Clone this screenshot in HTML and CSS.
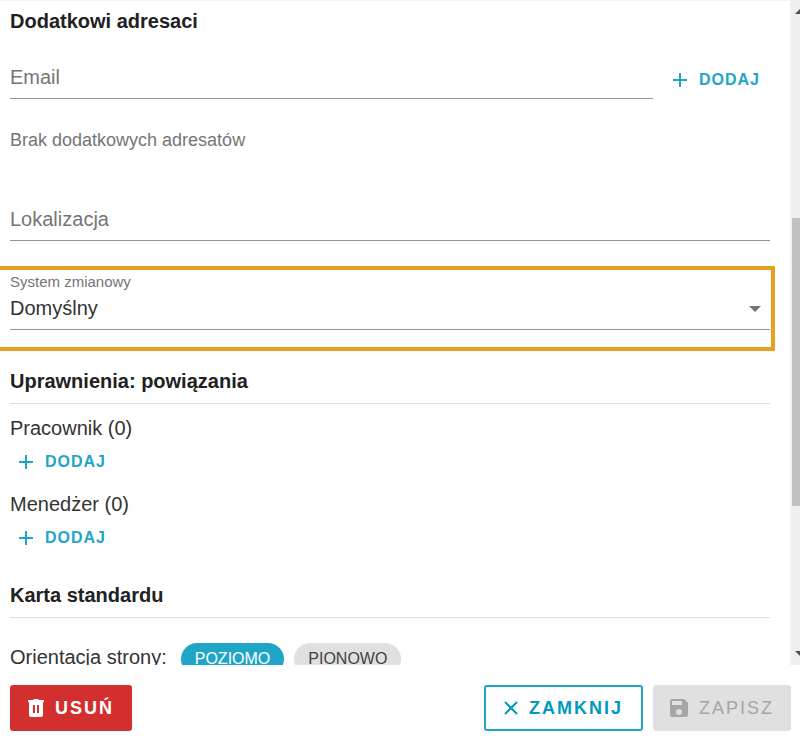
FILE: index.html
```html
<!DOCTYPE html>
<html lang="pl">
<head>
  <meta charset="UTF-8">
  <meta name="viewport" content="width=device-width, initial-scale=1">
  <title>Karta standardu</title>
  <link rel="stylesheet" href="styles.css">
</head>
<body>

<form class="dialog">
  <div class="dialog-body">
    <div class="content">
      <h2>Dodatkowi adresaci</h2>
      <div class="email-row">
        <input class="field" type="email" placeholder="Email" aria-label="Email">
        <button type="button" class="btn-text">
          <svg class="icon-plus" viewBox="0 0 14 14"><path d="M7 0v14M0 7h14"/></svg>
          Dodaj
        </button>
      </div>
      <p class="hint">Brak dodatkowych adresatów</p>
      <input class="field" type="text" placeholder="Lokalizacja" aria-label="Lokalizacja">

      <div class="highlight">
        <label for="shiftSystem">System zmianowy</label>
        <div class="select-wrap">
          <select id="shiftSystem" class="field">
            <option>Domyślny</option>
          </select>
          <svg class="icon-caret" viewBox="0 0 12 6"><path d="M0 0h12L6 6z"/></svg>
        </div>
      </div>

      <h2 class="section-title">Uprawnienia: powiązania</h2>
      <div class="group">
        <p>Pracownik (0)</p>
        <button type="button" class="btn-text">
          <svg class="icon-plus" viewBox="0 0 14 14"><path d="M7 0v14M0 7h14"/></svg>
          Dodaj
        </button>
      </div>
      <div class="group">
        <p>Menedżer (0)</p>
        <button type="button" class="btn-text">
          <svg class="icon-plus" viewBox="0 0 14 14"><path d="M7 0v14M0 7h14"/></svg>
          Dodaj
        </button>
      </div>

      <h2 class="section-title card-title">Karta standardu</h2>
      <div class="orientation">
        <span>Orientacja strony:</span>
        <div class="chips">
          <button type="button" class="chip active">Poziomo</button>
          <button type="button" class="chip">Pionowo</button>
        </div>
      </div>
    </div>

    <div class="scrollbar">
      <svg viewBox="0 0 10 16"><path d="M5 13l6-6 6 6z"/></svg>
      <div class="track">
        <div class="thumb"></div>
      </div>
      <svg viewBox="0 0 10 16"><path d="M5 2l6 6 6-6z"/></svg>
    </div>
  </div>

  <div class="footer">
    <button type="button" class="btn btn-delete">
      <svg class="icon-trash" viewBox="0 0 16 18"><path fill-rule="evenodd" d="M0 1h5l1-1h4l1 1h5v2H0zM1 3h14v13q0 2-2 2H3q-2 0-2-2zM5 6v8h2V6zM9 6v8h2V6z"/></svg>
      Usuń
    </button>
    <button type="button" class="btn btn-close">
      <svg class="icon-close" viewBox="0 0 14 14"><path d="M1 1l12 12M13 1L1 13"/></svg>
      Zamknij
    </button>
    <button type="submit" class="btn btn-save" disabled>
      <svg class="icon-save" viewBox="0 0 18 18"><path fill-rule="evenodd" d="M2 0h12l4 4v12q0 2-2 2H2q-2 0-2-2V2q0-2 2-2zM2 2v4h10V2zM9 10a3 3 0 1 0 0 6 3 3 0 0 0 0-6z"/></svg>
      Zapisz
    </button>
  </div>
</form>

</body>
</html>
```

FILE: styles.css
```css
* {
  box-sizing: border-box;
}

body {
  margin: 0;
  font-family: "Liberation Sans", Arial, sans-serif;
  font-size: 20px;
  line-height: 24px;
  color: #333;
  background: #fff;
}

h2,
p {
  margin: 0;
}

h2 {
  font-size: 20px;
  color: #212121;
}

button {
  font-family: inherit;
  text-transform: uppercase;
  cursor: pointer;
}

.dialog {
  display: flex;
  flex-direction: column;
  height: 100vh;
  border-top: 1px solid #f2f2f2;
}

.dialog-body {
  flex: 1;
  min-height: 0;
  display: flex;
  overflow: hidden;
}

.content {
  flex: 1;
  min-width: 0;
  padding: 8px 20px 0 10px;
  overflow: hidden;
}

/* Fields */
.field {
  display: block;
  width: 100%;
  height: 34px;
  padding: 0 0 9px;
  border: none;
  border-bottom: 1px solid #949494;
  border-radius: 0;
  outline: none;
  background: none;
  font-family: inherit;
  font-size: 20px;
  line-height: 24px;
  color: #333;
}

.field::placeholder {
  color: #757575;
  opacity: 1;
}

.email-row {
  display: flex;
  align-items: flex-end;
  gap: 11px;
  margin-top: 24px;
}

.email-row .field {
  flex: 1;
  min-width: 0;
  margin-top: 8px;
}

.email-row .btn-text {
  height: 38px;
}

.hint {
  margin: 29px 0 55px;
  font-size: 18px;
  color: #757575;
}

.highlight {
  margin: 25px -5px 0 -10px;
  padding: 3px 1px 17px 10px;
  border: 4px solid #e8a020;
  border-left: none;
}

.highlight label {
  display: block;
  font-size: 15px;
  line-height: 18px;
  color: #757575;
}

.select-wrap {
  position: relative;
  margin-top: 5px;
}

.select-wrap select {
  appearance: none;
}

.icon-caret {
  position: absolute;
  right: 9px;
  top: 10px;
  width: 12px;
  height: 6px;
  fill: #757575;
  pointer-events: none;
}

/* Sections */
.section-title {
  margin: 18px 0 12px;
  padding-bottom: 10px;
  border-bottom: 1px solid #e0e0e0;
}

.card-title {
  margin: 23px 0 25px;
}

.group {
  margin-bottom: 8px;
}

.btn-text {
  display: flex;
  align-items: center;
  gap: 12px;
  height: 44px;
  padding: 0 10px 0 9px;
  border: none;
  background: none;
  font-size: 16px;
  font-weight: bold;
  letter-spacing: 1px;
  color: #1fa5c8;
}

.icon-plus {
  width: 14px;
  height: 14px;
  fill: none;
  stroke: currentColor;
  stroke-width: 2;
}

.orientation {
  display: flex;
  gap: 14px;
  line-height: 28px;
}

.chips {
  display: flex;
  gap: 10px;
}

.chip {
  height: 32px;
  padding: 0 14px;
  border: none;
  border-radius: 16px;
  background: #e0e0e0;
  font-size: 16px;
  color: #424242;
}

.chip.active {
  background: #1fa5c8;
  color: #fff;
}

/* Scrollbar */
.scrollbar {
  display: flex;
  flex-direction: column;
  width: 10px;
  background: #f0f0f0;
}

.scrollbar svg {
  width: 10px;
  height: 16px;
  fill: #505050;
}

.track {
  flex: 1;
  padding-left: 2px;
}

.thumb {
  height: 288px;
  margin-top: 201px;
  background: #c1c1c1;
}

/* Footer */
.footer {
  display: flex;
  gap: 10px;
  padding: 20px 9px 16px 10px;
}

.btn {
  display: flex;
  align-items: center;
  gap: 11px;
  height: 46px;
  padding: 0 18px;
  border: 2px solid transparent;
  border-radius: 3px;
  font-size: 18px;
  font-weight: bold;
  letter-spacing: 2px;
}

.btn svg {
  fill: currentColor;
}

.btn-delete {
  margin-right: auto;
  padding: 0 16px;
  background: #d32f2f;
  color: #fff;
}

.btn-close {
  border-color: #1fa5c8;
  background: #fff;
  color: #0099bf;
}

.btn-save {
  padding: 0 15px;
  background: #e0e0e0;
  font-weight: normal;
  color: #a6a6a6;
  cursor: default;
}

.icon-trash {
  width: 16px;
  height: 18px;
}

.btn .icon-close {
  width: 14px;
  height: 14px;
  fill: none;
  stroke: currentColor;
  stroke-width: 2;
}

.icon-save {
  width: 18px;
  height: 18px;
}
```
